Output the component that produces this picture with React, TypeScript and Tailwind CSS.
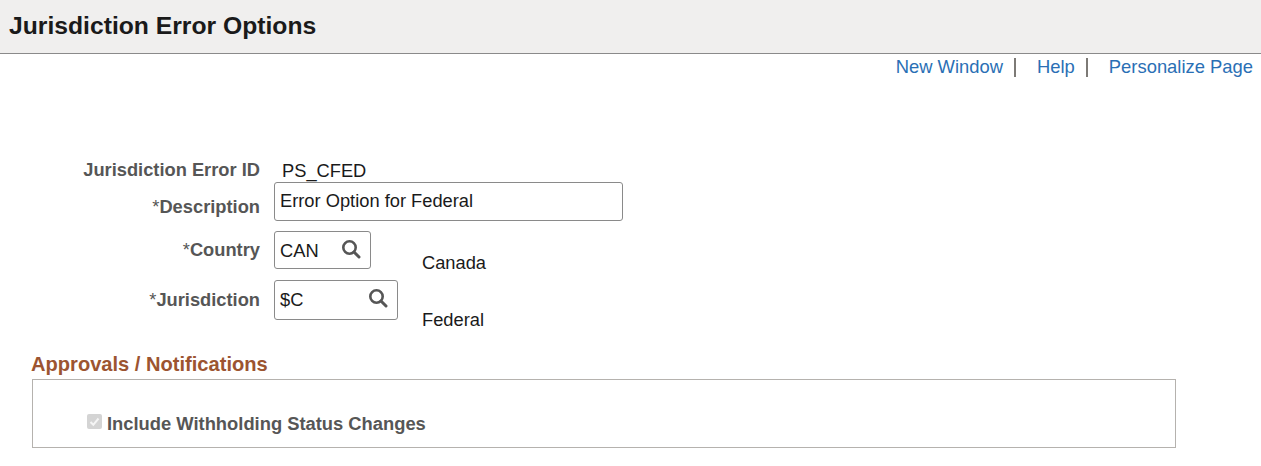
const SearchIcon = () => (
    <svg width="20" height="20" viewBox="0 0 20 20" fill="none" className="shrink-0">
        <circle cx="8.5" cy="8.5" r="6.2" stroke="#565656" strokeWidth="2.6" />
        <path d="M13 13l5 5" stroke="#565656" strokeWidth="3" strokeLinecap="round" />
    </svg>
);

const labelClass = "w-[260px] text-right text-[18.3px] font-bold text-[#565656] leading-5";

const App = () => {
    return (
        <div className="w-[1261px] h-[466px] overflow-hidden bg-white font-['Liberation_Sans',Arial,sans-serif]">
            <div className="h-[54px] bg-[#f0efee] border-b border-[#8a8a8a] pl-[9px] pt-[12px]">
                <h1 className="text-[24.7px] leading-7 font-bold text-[#1a1a1a]">Jurisdiction Error Options</h1>
            </div>

            <div className="flex justify-end items-center pr-2 pt-[3px] h-[23px] text-[18.4px] leading-5 text-[#2a6fb5]">
                <a>New Window</a>
                <span className="ml-[11px] mr-[21px] w-[2px] h-[19px] bg-[#7d7a76]"></span>
                <a>Help</a>
                <span className="ml-[11px] mr-[21px] w-[2px] h-[19px] bg-[#7d7a76]"></span>
                <a>Personalize Page</a>
            </div>

            <div className="mt-[83px]">
                <div className="flex items-center h-5">
                    <span className={labelClass}>Jurisdiction Error ID</span>
                    <span className="ml-[22px] mt-[1px] text-[18.3px] text-[#1a1a1a]">PS_CFED</span>
                </div>

                <div className="flex items-start mt-[2px]">
                    <span className={`${labelClass} mt-[15px]`}><span className="font-normal">*</span>Description</span>
                    <div className="ml-[14px] w-[349px] h-[39px] border border-[#8a8a8a] rounded-[3px] pl-[5px] pt-[8px] text-[18.3px] leading-5 text-[#1a1a1a]">Error Option for Federal</div>
                </div>

                <div className="flex items-start mt-[10px] h-[38px]">
                    <span className={`${labelClass} mt-[9px]`}><span className="font-normal">*</span>Country</span>
                    <div className="ml-[14px] w-[97px] h-[38px] border border-[#8a8a8a] rounded-[3px] pl-[5px] pr-[9px] flex items-center justify-between text-[18.3px] text-[#1a1a1a]">
                        <span className="mt-[1px]">CAN</span>
                        <span className="-mt-[3px]"><SearchIcon /></span>
                    </div>
                    <span className="ml-[51px] mt-[22px] text-[18.3px] leading-5 text-[#1a1a1a]">Canada</span>
                </div>

                <div className="flex items-start mt-[11px] h-[40px]">
                    <span className={`${labelClass} mt-[10px]`}><span className="font-normal">*</span>Jurisdiction</span>
                    <div className="ml-[14px] w-[124px] h-[40px] border border-[#8a8a8a] rounded-[3px] pl-[5px] pr-[9px] flex items-center justify-between text-[18.3px] text-[#1a1a1a]">
                        <span>$C</span>
                        <span className="-mt-[4px]"><SearchIcon /></span>
                    </div>
                    <span className="ml-[24px] mt-[30px] text-[18.3px] leading-5 text-[#1a1a1a]">Federal</span>
                </div>
            </div>

            <h2 className="ml-[31px] mt-[32px] text-[20.1px] leading-6 font-bold text-[#9c5430]">Approvals / Notifications</h2>
            <div className="ml-[32px] mt-[3px] w-[1144px] h-[69px] border border-[#b5b2ae] pl-[54px] pt-[33px] flex items-start">
                <span className="mt-[1px] w-[15px] h-[15px] rounded-[2px] bg-[#d4d4d4] flex items-center justify-center">
                    <svg width="11" height="11" viewBox="0 0 11 11" fill="none">
                        <path d="M1.5 6l2.8 2.8L9.5 2.5" stroke="#f5f5f5" strokeWidth="2" />
                    </svg>
                </span>
                <span className="ml-[5px] mt-[1px] text-[18.35px] leading-5 font-bold text-[#565656]">Include Withholding Status Changes</span>
            </div>
        </div>
    );
};

export default App;
